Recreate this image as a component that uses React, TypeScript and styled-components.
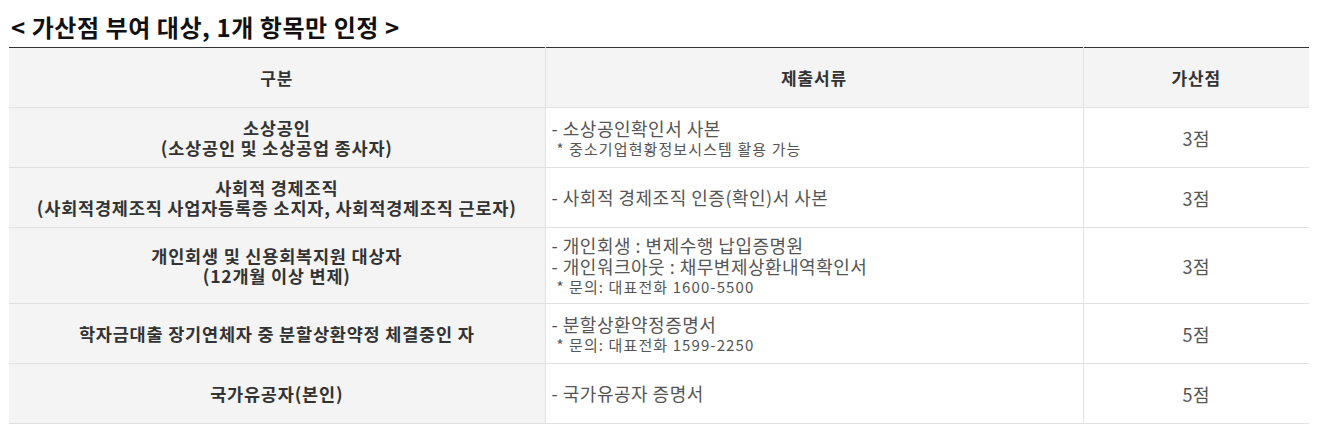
import styled, { createGlobalStyle } from "styled-components";

const GlobalStyle = createGlobalStyle`
  body {
    margin: 0;
    background: #fff;
    font-family: "Noto Sans CJK KR", "Noto Sans", sans-serif;
  }
`;

type Row = {
  id: number;
  target: string[];
  docs: string[];
  notes: string[];
  point: string;
  tall?: boolean;
};

const rows: Row[] = [
  {
    id: 1,
    target: ["소상공인", "(소상공인 및 소상공업 종사자)"],
    docs: ["- 소상공인확인서 사본"],
    notes: ["* 중소기업현황정보시스템 활용 가능"],
    point: "3점",
  },
  {
    id: 2,
    target: ["사회적 경제조직", "(사회적경제조직 사업자등록증 소지자, 사회적경제조직 근로자)"],
    docs: ["- 사회적 경제조직 인증(확인)서 사본"],
    notes: [],
    point: "3점",
  },
  {
    id: 3,
    target: ["개인회생 및 신용회복지원 대상자", "(12개월 이상 변제)"],
    docs: ["- 개인회생 : 변제수행 납입증명원", "- 개인워크아웃 : 채무변제상환내역확인서"],
    notes: ["* 문의: 대표전화 1600-5500"],
    point: "3점",
    tall: true,
  },
  {
    id: 4,
    target: ["학자금대출 장기연체자 중 분할상환약정 체결중인 자"],
    docs: ["- 분할상환약정증명서"],
    notes: ["* 문의: 대표전화 1599-2250"],
    point: "5점",
  },
  {
    id: 5,
    target: ["국가유공자(본인)"],
    docs: ["- 국가유공자 증명서"],
    notes: [],
    point: "5점",
  },
];

const App = () => {
  return (
    <Wrap>
      <GlobalStyle />
      <Title>&lt; 가산점 부여 대상, 1개 항목만 인정 &gt;</Title>
      <Table>
        <colgroup>
          <col style={{ width: 536 }} />
          <col style={{ width: 538 }} />
          <col style={{ width: 226 }} />
        </colgroup>
        <thead>
          <tr>
            <Th>구분</Th>
            <Th>제출서류</Th>
            <Th>가산점</Th>
          </tr>
        </thead>
        <tbody>
          {rows.map((row) => (
            <BodyRow key={row.id} $tall={row.tall}>
              <TargetCell>
                {row.target.map((line, i) => (
                  <Line key={i}>{line}</Line>
                ))}
              </TargetCell>
              <DocCell>
                {row.docs.map((line, i) => (
                  <DocLine key={i}>{line}</DocLine>
                ))}
                {row.notes.map((line, i) => (
                  <Note key={i}>{line}</Note>
                ))}
              </DocCell>
              <PointCell>{row.point}</PointCell>
            </BodyRow>
          ))}
        </tbody>
      </Table>
    </Wrap>
  );
};
export default App;

const Wrap = styled.div`
  padding: 0 12px 0 9px;
`;

const Title = styled.h2`
  margin: 13px 0 6px 2px;
  font-size: 24px;
  line-height: 28px;
  font-weight: 700;
  color: #111;
  letter-spacing: 0.55px;
`;

const Table = styled.table`
  width: 1300px;
  border-collapse: collapse;
  table-layout: fixed;
  border-top: 1px solid #333;
`;

const Th = styled.th`
  height: 59px;
  padding: 0;
  background: #f4f4f4;
  border-bottom: 1px solid #e2e2e2;
  border-left: 1px solid #e2e2e2;
  font-size: 17px;
  font-weight: 700;
  letter-spacing: 0.8px;
  color: #333;
  text-align: center;
  vertical-align: middle;

  &:first-child {
    border-left: none;
  }
`;

const BodyRow = styled.tr<{ $tall?: boolean }>`
  height: ${({ $tall }) => ($tall ? "76px" : "60px")};

  & > td {
    border-bottom: 1px solid #e2e2e2;
    border-left: 1px solid #e2e2e2;
    vertical-align: middle;
    padding: 0;
  }

  & > td:first-child {
    border-left: none;
  }
`;

const TargetCell = styled.td`
  background: #f4f4f4;
  text-align: center;
  font-size: 17.5px;
  font-weight: 700;
  letter-spacing: 0.8px;
  line-height: 20px;
  color: #333;
`;

const DocCell = styled.td`
  background: #fff;
  text-align: left;
  padding-left: 6px !important;
  color: #555;
`;

const PointCell = styled.td`
  background: #fff;
  text-align: center;
  font-size: 18px;
  letter-spacing: 0.5px;
  color: #555;
`;

const Line = styled.div``;

const DocLine = styled.div`
  font-size: 18px;
  line-height: 21px;
  letter-spacing: 0.5px;
`;

const Note = styled.div`
  padding-left: 5px;
  font-size: 15px;
  line-height: 19px;
  letter-spacing: 1.1px;
  color: #555;
`;
